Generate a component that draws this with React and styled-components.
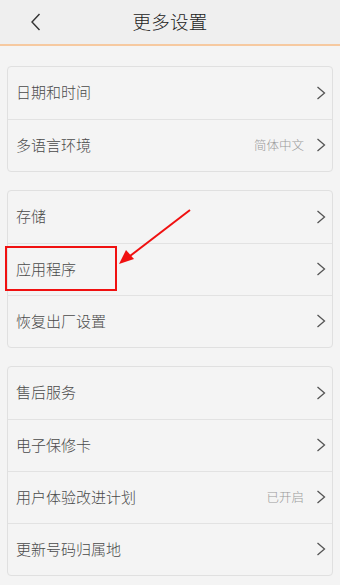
import React from "react";
import styled, { createGlobalStyle } from "styled-components";

const Global = createGlobalStyle`
  html, body { margin: 0; padding: 0; background: #f4f4f4; }
  body { font-family: "Noto Sans CJK SC", "Noto Sans", sans-serif; }
`;

const Page = styled.div`
  width: 340px;
  height: 585px;
  background: #f4f4f4;
  position: relative;
  overflow: hidden;
`;

const Header = styled.div`
  height: 44px;
  background: #efefef;
  border-bottom: 2px solid #f6c9a0;
  display: flex;
  align-items: center;
  justify-content: center;
  position: relative;
`;

const Back = styled.svg`
  position: absolute;
  left: 30px;
  top: 13px;
`;

const Title = styled.div`
  font-size: 18.5px;
  font-weight: 300;
  color: #222;
  letter-spacing: 0.3px;
  padding-bottom: 2px;
`;

const Content = styled.div`
  padding: 20px 7px 0 7px;
  display: flex;
  flex-direction: column;
  gap: 18px;
`;

const Card = styled.div`
  background: #f4f4f4;
  border: 1px solid #e0e0e0;
  border-radius: 4px;
  display: flex;
  flex-direction: column;
`;

const Row = styled.div`
  box-sizing: border-box;
  height: 52px;
  display: flex;
  align-items: center;
  padding: 0 6px 3px 8px;
  border-top: ${(p) => (p.$first ? "none" : "1px solid #e2e2e2")};
  position: relative;
`;

const Label = styled.div`
  flex: 1;
  font-size: 15px;
  font-weight: 300;
  color: #4a4a4a;
`;

const Value = styled.div`
  font-size: 12.5px;
  font-weight: 300;
  color: #9a9a9a;
  margin-right: 12px;
`;

const ChevronSvg = styled.svg`
  margin-top: 2px;
`;

const Chevron = () => (
  <ChevronSvg width="10" height="14" viewBox="0 0 10 14">
    <path d="M1.5 1 L8.5 7 L1.5 13" fill="none" stroke="#555" strokeWidth="1.3" />
  </ChevronSvg>
);

const Highlight = styled.div`
  position: absolute;
  left: -3px;
  top: 2px;
  width: 112px;
  height: 45px;
  border: 2px solid #f01010;
  box-sizing: border-box;
  pointer-events: none;
`;

const Arrow = styled.svg`
  position: absolute;
  left: 0;
  top: 0;
  pointer-events: none;
`;

const groups = [
  [
    { label: "日期和时间" },
    { label: "多语言环境", value: "简体中文" },
  ],
  [
    { label: "存储" },
    { label: "应用程序", highlight: true },
    { label: "恢复出厂设置" },
  ],
  [
    { label: "售后服务" },
    { label: "电子保修卡" },
    { label: "用户体验改进计划", value: "已开启" },
    { label: "更新号码归属地" },
  ],
];

export default function App() {
  return (
    <Page>
      <Global />
      <Header>
        <Back width="12" height="18" viewBox="0 0 12 18">
          <path d="M9.5 1 L2 9 L9.5 17" fill="none" stroke="#333" strokeWidth="1.4" />
        </Back>
        <Title>更多设置</Title>
      </Header>
      <Content>
        {groups.map((g, gi) => (
          <Card key={gi}>
            {g.map((r, ri) => (
              <Row key={ri} $first={ri === 0}>
                <Label>{r.label}</Label>
                {r.value && <Value>{r.value}</Value>}
                <Chevron />
                {r.highlight && <Highlight />}
              </Row>
            ))}
          </Card>
        ))}
      </Content>
      <Arrow width="340" height="585" viewBox="0 0 340 585">
        <line x1="190" y1="210" x2="130" y2="256" stroke="#f01010" strokeWidth="2" />
        <polygon points="119,264 126,250 134,259" fill="#f01010" />
      </Arrow>
    </Page>
  );
}
